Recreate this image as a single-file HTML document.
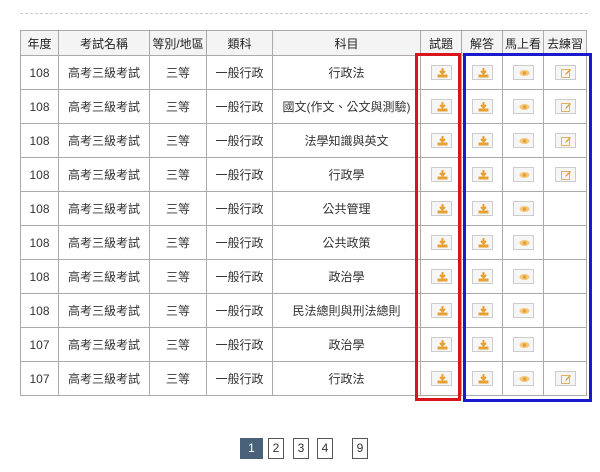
<!DOCTYPE html>
<html><head><meta charset="utf-8"><style>
body{margin:0;background:#fff;font-family:"Liberation Sans","Noto Sans CJK TC",sans-serif;font-size:12px;color:#333;width:600px;height:472px;position:relative;overflow:hidden}
.dash{position:absolute;left:20px;top:13px;width:568px;border-top:1px dashed #ccc}
table{position:absolute;left:20px;top:30px;border-collapse:collapse;table-layout:fixed}
td,th{border:1px solid #aaa;text-align:center;padding:0;height:33px;font-weight:normal}
th{height:24px;background:#f4f4f4;color:#222}
.b{display:inline-block;width:21px;height:15px;border:1px solid #ccc;background:#f6f6f6;vertical-align:middle;position:relative;box-sizing:border-box}
.b svg{position:absolute;left:5px;top:2px}
.box{position:absolute;box-sizing:border-box;border:3px solid}
.pg{position:absolute;top:438px;height:21px;box-sizing:border-box;border:1px solid #555;text-align:center;line-height:19px;font-size:12px;color:#333;background:#fff}
</style></head><body>
<div class="dash"></div>
<table>
<colgroup><col style="width:38px"><col style="width:91px"><col style="width:57px"><col style="width:66px"><col style="width:148px"><col style="width:41px"><col style="width:41px"><col style="width:41px"><col style="width:43px"></colgroup>
<tr><th>年度</th><th>考試名稱</th><th>等別/地區</th><th>類科</th><th>科目</th><th>試題</th><th>解答</th><th>馬上看</th><th>去練習</th></tr>
</table>
<script>
var D='<span class="b"><svg width="11" height="10" viewBox="0 0 11 10"><path d="M5.5 0v5M3 3l2.5 2.5L8 3" stroke="#e8a030" stroke-width="2" fill="none"/><rect x="0.5" y="6.5" width="10" height="3" fill="#e8a030"/></svg></span>';
var E='<span class="b"><svg width="11" height="10" viewBox="0 0 11 10"><ellipse cx="5.5" cy="5" rx="5" ry="3" fill="#f5c77e"/><circle cx="5.5" cy="5" r="1.8" fill="#e8a030"/></svg></span>';
var P='<span class="b"><svg width="11" height="10" viewBox="0 0 11 10"><rect x="0.5" y="1.5" width="8" height="8" fill="none" stroke="#e8b060"/><path d="M4 7l1-2 4-4 1 1-4 4z" fill="#e8a030"/></svg></span>';
var rows=[["108","行政法",1],["108","國文(作文、公文與測驗)",1],["108","法學知識與英文",1],["108","行政學",1],["108","公共管理",0],["108","公共政策",0],["108","政治學",0],["108","民法總則與刑法總則",0],["107","政治學",0],["107","行政法",1]];
var t=document.querySelector('table'),h='';
rows.forEach(function(r){h+='<tr><td>'+r[0]+'</td><td>高考三級考試</td><td>三等</td><td>一般行政</td><td>'+r[1]+'</td><td>'+D+'</td><td>'+D+'</td><td>'+E+'</td><td>'+(r[2]?P:'')+'</td></tr>';});
t.insertAdjacentHTML('beforeend',h);
</script>
<div class="box" style="left:415px;top:53px;width:46px;height:348px;border-color:#d9141b"></div>
<div class="box" style="left:463px;top:53px;width:129px;height:349px;border-color:#1a1acc"></div>
<div class="pg" style="left:240px;width:23px;background:#4a617a;border-color:#4a617a;color:#fff">1</div>
<div class="pg" style="left:268px;width:16px">2</div>
<div class="pg" style="left:293px;width:16px">3</div>
<div class="pg" style="left:317px;width:16px">4</div>
<div class="pg" style="left:352px;width:16px">9</div>
</body></html>
